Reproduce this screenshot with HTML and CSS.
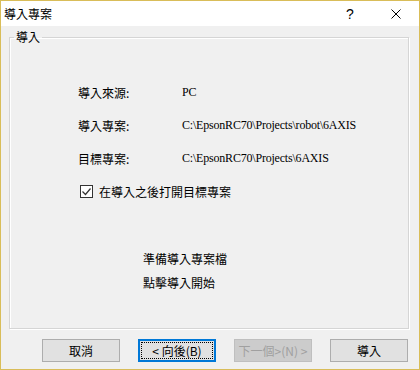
FILE: index.html
```html
<!DOCTYPE html>
<html>
<head>
  <meta charset="utf-8">
  <title>導入專案</title>
  <link rel="stylesheet" href="styles.css">
</head>
<body>
  <div class="window">
    <div class="titlebar">
      <span class="title">導入專案</span>
      <div class="caption-buttons">
        <span class="caption-btn help">?</span>
        <span class="caption-btn close">
          <svg width="10" height="10" viewBox="0 0 10 10">
            <path d="M0.5 0.5 L9.5 9.5 M9.5 0.5 L0.5 9.5" stroke="#000" stroke-width="1" fill="none"/>
          </svg>
        </span>
      </div>
    </div>

    <div class="body">
      <fieldset class="group">
        <legend>導入</legend>

        <div class="group-body">
          <div class="info">
            <span>導入來源:</span>
            <span class="path">PC</span>
            <span>導入專案:</span>
            <span class="path">C:\EpsonRC70\Projects\robot\6AXIS</span>
            <span>目標專案:</span>
            <span class="path">C:\EpsonRC70\Projects\6AXIS</span>
          </div>

          <div class="check-row">
            <span class="checkbox">
              <svg width="11" height="11" viewBox="0 0 11 11">
                <path d="M1.5 5.5 L4.5 8.5 L9.5 2.5" stroke="#333" stroke-width="1.2" fill="none"/>
              </svg>
            </span>
            <span>在導入之後打開目標專案</span>
          </div>

          <div class="status">
            <p>準備導入專案檔</p>
            <p>點擊導入開始</p>
          </div>
        </div>
      </fieldset>

      <div class="footer">
        <button>取消</button>
        <button class="focused">&lt; 向後(B)</button>
        <button disabled>下一個&gt;(N) &gt;</button>
        <button>導入</button>
      </div>
    </div>
  </div>
</body>
</html>
```

FILE: styles.css
```css
:root {
  --win-border: #d9bd59;
  --win-bg: #f0f0f0;
  --btn-bg: #e1e1e1;
  --btn-border: #adadad;
  --focus-blue: #0078d7;
  --group-line: #d5d5d5;
  --ui-font: "Noto Sans CJK TC", "Noto Sans", sans-serif;
  --path-font: "Liberation Serif", "Noto Sans CJK TC", serif;
}

* {
  margin: 0;
  padding: 0;
  box-sizing: border-box;
}

body {
  width: 420px;
  height: 370px;
  font-family: var(--ui-font);
  font-size: 12px;
  color: #000;
  background: var(--win-bg);
}

.window {
  display: flex;
  flex-direction: column;
  width: 420px;
  height: 370px;
  border: 1px solid var(--win-border);
  background: var(--win-bg);
}

.titlebar {
  display: flex;
  align-items: center;
  justify-content: space-between;
  height: 25px;
  background: #fff;
}

.title {
  padding-left: 3px;
  line-height: 25px;
}

.caption-buttons {
  display: flex;
  height: 100%;
}

.caption-btn {
  display: flex;
  align-items: center;
  justify-content: center;
  width: 46px;
  height: 100%;
  font-family: "Liberation Sans", sans-serif;
  font-size: 14px;
}

.caption-btn.close svg {
  margin-top: 1px;
}

.body {
  flex: 1;
  display: flex;
  flex-direction: column;
  padding: 4px 10px 7px 8px;
}

.group {
  flex: 1;
  min-width: 0;
  margin: 0;
  padding: 0;
  border: 1px solid var(--group-line);
  box-shadow: inset 1px 1px 0 #fff, 1px 1px 0 #fff;
}

.group legend {
  margin-left: 4px;
  padding: 0 2px;
  line-height: 14px;
}

.group-body {
  padding: 32px 0 0 68px;
}

.info {
  display: grid;
  grid-template-columns: 104px auto;
  grid-auto-rows: 33px;
  align-items: center;
}

.path {
  font-family: var(--path-font);
  font-size: 12px;
  letter-spacing: -0.2px;
}

.check-row {
  display: flex;
  align-items: center;
  gap: 6px;
  height: 33px;
  padding-left: 2px;
}

.checkbox {
  display: flex;
  align-items: center;
  justify-content: center;
  width: 13px;
  height: 13px;
  background: #fff;
  border: 1px solid #333;
}

.status {
  margin-top: 39px;
  padding-left: 65px;
}

.status p {
  line-height: 24px;
}

.footer {
  display: flex;
  justify-content: flex-end;
  gap: 18px;
  margin-top: 10px;
  padding-right: 1px;
}

button {
  width: 78px;
  height: 23px;
  font-family: var(--ui-font);
  font-size: 12px;
  color: #000;
  background: var(--btn-bg);
  border: 1px solid var(--btn-border);
}

button.focused {
  border-color: var(--focus-blue);
  box-shadow: inset 0 0 0 1px var(--focus-blue);
  outline: 1px dotted #000;
  outline-offset: -4px;
}

button:disabled {
  color: #a0a0a0;
  background: #cccccc;
  border-color: #bfbfbf;
}
```
